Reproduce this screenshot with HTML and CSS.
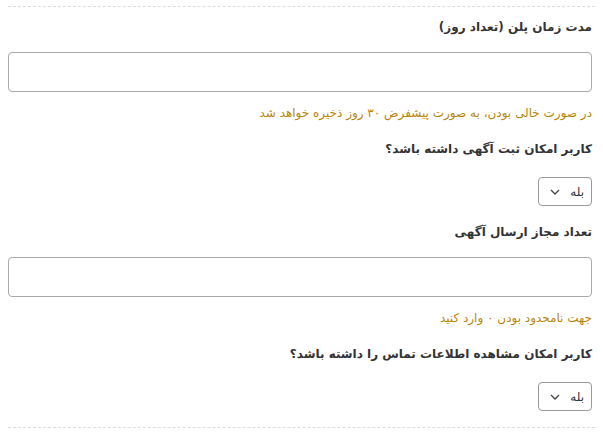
FILE: index.html
```html
<!DOCTYPE html>
<html lang="fa" dir="rtl">
<head>
    <meta charset="UTF-8">
    <meta name="viewport" content="width=device-width, initial-scale=1.0">
    <title>تنظیمات پلن</title>
    <link rel="stylesheet" href="styles.css">
</head>
<body>
    <div class="plan-box">
        <div class="field">
            <label for="planDays">مدت زمان پلن (تعداد روز)</label>
            <input type="text" id="planDays">
            <p class="hint">در صورت خالی بودن، به صورت پیشفرض ۳۰ روز ذخیره خواهد شد</p>
        </div>

        <div class="field field-select">
            <label>کاربر امکان ثبت آگهی داشته باشد؟</label>
            <div class="select">
                <span>بله</span>
                <svg width="10" height="6" viewBox="0 0 10 6"><path d="M1 1l4 4 4-4" fill="none" stroke="#444" stroke-width="1.3"/></svg>
            </div>
        </div>

        <div class="field">
            <label for="postCount">تعداد مجاز ارسال آگهی</label>
            <input type="text" id="postCount">
            <p class="hint">جهت نامحدود بودن ۰ وارد کنید</p>
        </div>

        <div class="field field-select">
            <label>کاربر امکان مشاهده اطلاعات تماس را داشته باشد؟</label>
            <div class="select">
                <span>بله</span>
                <svg width="10" height="6" viewBox="0 0 10 6"><path d="M1 1l4 4 4-4" fill="none" stroke="#444" stroke-width="1.3"/></svg>
            </div>
        </div>
    </div>
</body>
</html>
```

FILE: styles.css
```css
body {
    margin: 0;
    font-family: "DejaVu Sans", sans-serif;
    color: #333;
    background: #fff;
}
.plan-box {
    margin: 6px 8px 0 8px;
    padding: 10px 3px 16px 0;
    border-top: 1px dashed #ddd;
    border-bottom: 1px dashed #ddd;
}
.field {
    margin-bottom: 17px;
}
.field-select {
    margin-bottom: 16px;
}
.field:last-child {
    margin-bottom: 0;
}
label {
    display: block;
    font-size: 12px;
    line-height: 20px;
    font-weight: bold;
    color: #333;
    margin-bottom: 15px;
}
.field-select label {
    margin-bottom: 18px;
}
input {
    display: block;
    box-sizing: border-box;
    width: 100%;
    height: 40px;
    border: 1px solid #aaa;
    border-radius: 4px;
    margin: 0;
}
.hint {
    font-size: 12px;
    line-height: 18px;
    color: #b8860b;
    margin: 12px 0 0 0;
}
.select {
    display: flex;
    align-items: center;
    justify-content: space-between;
    box-sizing: border-box;
    width: 54px;
    height: 29px;
    padding: 0 7px 0 11px;
    border: 1px solid #999;
    border-radius: 4px;
    font-size: 12px;
}
```
